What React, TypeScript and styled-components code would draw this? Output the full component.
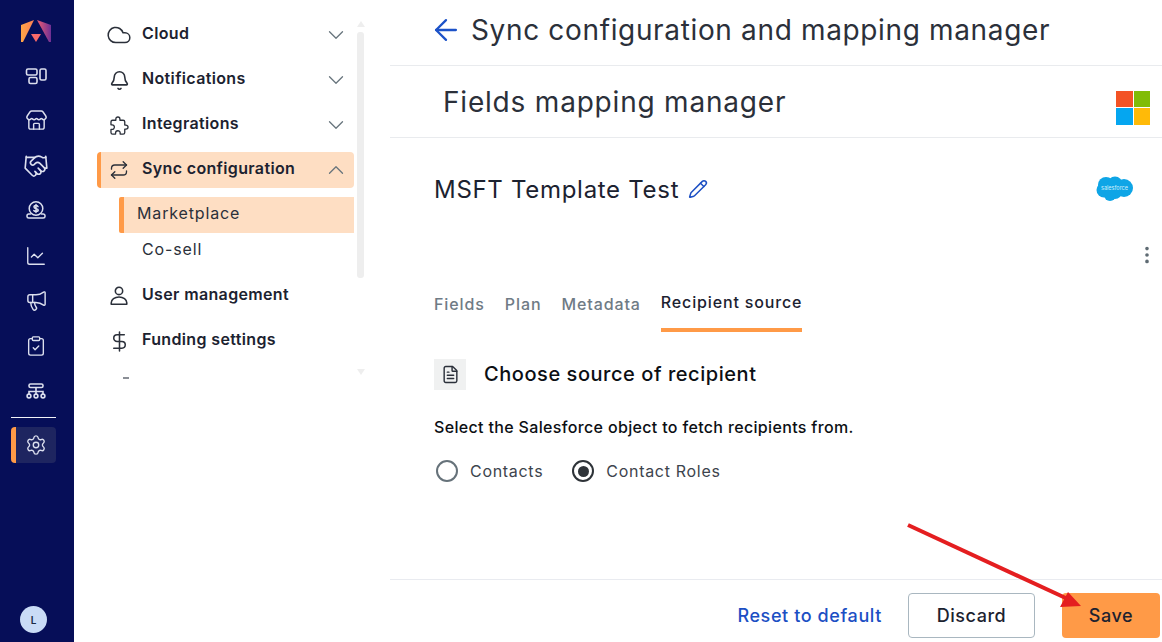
import React from "react";
import styled, { createGlobalStyle } from "styled-components";
import {
  ArrowLeft,
  Bell,
  ChartLine,
  ChevronDown,
  ChevronUp,
  ClipboardCheck,
  Cloud,
  DollarSign,
  EllipsisVertical,
  FileText,
  Handshake,
  Megaphone,
  Pencil,
  Repeat,
  Settings,
  Store,
} from "lucide-react";
import { IoExtensionPuzzleOutline } from "react-icons/io5";

const GlobalStyle = createGlobalStyle`
  html, body {
    margin: 0;
    padding: 0;
    background: #fff;
    font-family: "Inter", "Noto Sans", sans-serif;
  }
  * { box-sizing: border-box; }
`;

const Page = styled.div`
  position: relative;
  display: flex;
  width: 1162px;
  height: 642px;
  overflow: hidden;
  color: #1c2230;
`;

const Rail = styled.nav`
  display: flex;
  flex-direction: column;
  align-items: center;
  width: 74px;
  padding: 8px 18px 9px 11px;
  background: #060e58;
  flex-shrink: 0;
`;

const RailIcon = styled.div`
  display: flex;
  align-items: center;
  justify-content: center;
  width: 45px;
  height: 45px;
  padding-left: 5px;
  flex-shrink: 0;
  color: #dcdfee;
`;

const RailDivider = styled.div`
  width: 45px;
  height: 1px;
  margin: 4px 0 9px;
  background: #f1f2f8;
`;

const RailActive = styled.div`
  display: flex;
  align-items: center;
  justify-content: center;
  width: 45px;
  height: 36px;
  border-left: 5px solid #ff9a47;
  border-radius: 4px;
  background: #1e2560;
  color: #dcdfee;
`;

const Avatar = styled.div`
  display: flex;
  align-items: center;
  justify-content: center;
  width: 27px;
  height: 27px;
  margin-top: auto;
  border-radius: 50%;
  background: #c9dbf6;
  color: #1c2a44;
  font-size: 10px;
  font-weight: 600;
`;

const Sidebar = styled.aside`
  display: flex;
  width: 316px;
  height: 380px;
  padding-left: 23px;
  flex-shrink: 0;
  overflow: hidden;
`;

const Menu = styled.div`
  width: 257px;
  padding-top: 17px;
`;

const MenuItem = styled.div<{ $active?: boolean }>`
  display: flex;
  align-items: center;
  height: 36px;
  margin-bottom: 9px;
  padding-left: ${(p) => (p.$active ? "7px" : "11px")};
  padding-right: 5px;
  border-left: ${(p) => (p.$active ? "4px solid #ff9a47" : "none")};
  border-radius: 4px;
  background: ${(p) => (p.$active ? "#fedec3" : "transparent")};
  color: #2b303a;
`;

const NavIcon = styled.span`
  display: flex;
  align-items: center;
  justify-content: center;
  width: 22px;
  height: 26px;
  flex-shrink: 0;

  svg {
    flex-shrink: 0;
  }
`;

const MenuLabel = styled.span`
  flex: 1;
  margin-left: 12px;
  padding-bottom: 4px;
  color: #1c2230;
  font-size: 16px;
  font-weight: 600;
  letter-spacing: 0.35px;
`;

const Chevron = styled.span`
  display: flex;
  color: #68757d;
`;

const SubItem = styled.div<{ $active?: boolean }>`
  display: flex;
  align-items: center;
  height: ${(p) => (p.$active ? "36px" : "32px")};
  margin-left: 22px;
  margin-bottom: ${(p) => (p.$active ? "0" : "13px")};
  padding-left: ${(p) => (p.$active ? "13px" : "23px")};
  padding-bottom: ${(p) => (p.$active ? "4px" : "0")};
  border-left: ${(p) => (p.$active ? "5px solid #ff9a47" : "none")};
  border-radius: 2px 0 0 2px;
  background: ${(p) => (p.$active ? "#fedec3" : "transparent")};
  color: #2b303a;
  font-size: 16px;
  letter-spacing: 0.85px;
`;

const ClippedMark = styled.div`
  width: 6px;
  height: 2px;
  margin: 18px 0 0 26px;
  background: #8b8f96;
`;

const ScrollRail = styled.div`
  display: flex;
  flex-direction: column;
  align-items: center;
  width: 9px;
  margin-left: 2px;
  padding-top: 21px;
`;

const ScrollUp = styled.div`
  width: 0;
  height: 0;
  border-left: 4.5px solid transparent;
  border-right: 4.5px solid transparent;
  border-bottom: 6px solid #eeeeee;
`;

const ScrollDown = styled.div`
  width: 0;
  height: 0;
  margin-top: 91px;
  border-left: 4.5px solid transparent;
  border-right: 4.5px solid transparent;
  border-top: 6px solid #eeeeee;
`;

const ScrollThumb = styled.div`
  width: 7px;
  height: 246px;
  margin-top: 5px;
  border-radius: 3px;
  background: #eeeeee;
`;

const Main = styled.main`
  display: flex;
  flex-direction: column;
  flex: 1;
  min-width: 0;
`;

const Header = styled.header`
  display: flex;
  align-items: center;
  gap: 8px;
  height: 66px;
  padding: 0 0 6px 39px;
  border-bottom: 1px solid #e9ebee;
  color: #1c52c8;
`;

const HeaderTitle = styled.h1`
  margin: 0;
  color: #2b303a;
  font-size: 28px;
  font-weight: 400;
  letter-spacing: 0.65px;
`;

const SubHeader = styled.div`
  display: flex;
  align-items: center;
  justify-content: space-between;
  height: 72px;
  padding: 0 12px 0 53px;
  border-bottom: 1px solid #e9ebee;
`;

const SubTitle = styled.h2`
  margin: 0;
  color: #2b303a;
  font-size: 28px;
  font-weight: 400;
  letter-spacing: 0.8px;
`;

const MsLogo = styled.div`
  display: grid;
  grid-template-columns: 16.5px 16.5px;
  grid-auto-rows: 16.5px;
  gap: 1px;
  margin-top: 12px;
`;

const MsTile = styled.span<{ $color: string }>`
  background: ${(p) => p.$color};
`;

const Body = styled.section`
  flex: 1;
  padding: 32px 0 0 44px;
`;

const TitleRow = styled.div`
  display: flex;
  align-items: center;
  height: 38px;
  padding-right: 27px;
`;

const TemplateName = styled.div`
  color: #1c2230;
  font-size: 24px;
  letter-spacing: 0.7px;
`;

const EditIcon = styled.span`
  display: flex;
  margin: 0 auto 0 9px;
  color: #1c4fc4;
`;

const KebabRow = styled.div`
  display: flex;
  justify-content: flex-end;
  height: 22px;
  margin-top: 36px;
  padding-right: 4px;
  color: #5f6b73;
`;

const Tabs = styled.div`
  display: flex;
  gap: 20px;
  margin-top: 24px;
`;

const Tab = styled.div<{ $active?: boolean }>`
  height: 42px;
  padding-top: ${(p) => (p.$active ? "0" : "2px")};
  border-bottom: ${(p) => (p.$active ? "4px solid #ff9a47" : "none")};
  color: ${(p) => (p.$active ? "#1c2230" : "#6f7b85")};
  font-size: 16px;
  font-weight: 500;
  line-height: 24px;
  letter-spacing: ${(p) => (p.$active ? "0.85px" : "0.9px")};
`;

const SectionHead = styled.div`
  display: flex;
  align-items: center;
  gap: 18px;
  margin-top: 27px;
`;

const IconBox = styled.div`
  display: flex;
  align-items: center;
  justify-content: center;
  width: 32px;
  height: 31px;
  background: #f0f1f1;
  color: #2b303a;
`;

const SectionTitle = styled.div`
  padding-bottom: 2px;
  color: #0c0f14;
  font-size: 20px;
  font-weight: 500;
  letter-spacing: 0.55px;
`;

const Description = styled.div`
  margin-top: 26px;
  color: #0c0f14;
  font-size: 16px;
  font-weight: 500;
  line-height: 22px;
  letter-spacing: 0.34px;
`;

const RadioRow = styled.div`
  display: flex;
  gap: 29px;
  margin-top: 22px;
  padding-left: 2px;
`;

const RadioOption = styled.label`
  display: flex;
  align-items: center;
  gap: 12px;
  color: #3d444d;
  font-size: 16px;
  letter-spacing: 0.7px;
`;

const RadioCircle = styled.span<{ $checked?: boolean }>`
  display: flex;
  align-items: center;
  justify-content: center;
  width: 22px;
  height: 22px;
  border: 2.5px solid ${(p) => (p.$checked ? "#2e3338" : "#66727a")};
  border-radius: 50%;

  &::after {
    content: "";
    display: ${(p) => (p.$checked ? "block" : "none")};
    width: 11px;
    height: 11px;
    border-radius: 50%;
    background: #2e3338;
  }
`;

const Footer = styled.footer`
  display: flex;
  align-items: center;
  justify-content: flex-end;
  height: 63px;
  padding: 9px 2px 0 0;
  border-top: 1px solid #e9ebf0;
`;

const ResetLink = styled.a`
  margin-right: 26px;
  color: #1c4fc4;
  font-size: 18px;
  font-weight: 500;
  letter-spacing: 0.6px;
`;

const DiscardButton = styled.button`
  width: 127px;
  height: 45px;
  margin-right: 27px;
  border: 1px solid #a9b7c0;
  border-radius: 4px;
  background: #fff;
  color: #1c2230;
  font: 500 18px "Inter", sans-serif;
  letter-spacing: 0.55px;
`;

const SaveButton = styled.button`
  width: 98px;
  height: 45px;
  border: none;
  border-radius: 4px;
  background: #ff9a47;
  color: #1c2230;
  font: 500 18px "Inter", sans-serif;
  letter-spacing: 0.55px;
`;

const Annotation = styled.svg`
  position: absolute;
  left: 0;
  top: 0;
  pointer-events: none;
`;

function BrandLogo() {
  return (
    <svg width="32" height="24" viewBox="20 18 32 24">
      <defs>
        <linearGradient id="wingL" x1="0" y1="0" x2="1" y2="0">
          <stop offset="0" stopColor="#ffa646" />
          <stop offset="1" stopColor="#fb7f56" />
        </linearGradient>
        <linearGradient id="wingR" x1="0" y1="0" x2="1" y2="0">
          <stop offset="0" stopColor="#ee5d72" />
          <stop offset="1" stopColor="#6d2f95" />
        </linearGradient>
      </defs>
      <polygon points="21,24 34,19 23,41 21,41" fill="url(#wingL)" />
      <polygon points="37,19 51,24 51,41 49,41" fill="url(#wingR)" />
      <polygon points="31,33 41,33 36,41" fill="#fb6a6a" />
    </svg>
  );
}

function BoardsIcon() {
  return (
    <svg width="24" height="24" viewBox="0 0 24 24" fill="none" stroke="currentColor" strokeWidth="1.6">
      <rect x="2.500" y="5" width="10.500" height="6" rx="1.500" />
      <rect x="5" y="13.500" width="8" height="6" rx="1.500" />
      <rect x="16" y="5" width="6" height="11" rx="1.500" />
    </svg>
  );
}

function CoinIcon() {
  return (
    <svg width="24" height="24" viewBox="0 0 24 24" fill="none" stroke="currentColor" strokeWidth="1.5" strokeLinecap="round">
      <circle cx="12" cy="9.500" r="6.800" />
      <path d="M14 7.600c-.5-.7-1.200-1-2-1-1.200 0-2 .6-2 1.500 0 2.100 4.200 1 4.200 3 0 .9-.9 1.500-2.200 1.500-.9 0-1.700-.4-2.200-1.100M12 5.500v8" />
      <path d="M6.500 15H4.800C3.800 15 3 15.800 3 16.800v.7c0 1 .8 1.500 1.800 1.500h14.400c1 0 1.800-.5 1.800-1.500v-.7c0-1-.8-1.800-1.800-1.800h-1.700" />
    </svg>
  );
}

function OrgIcon() {
  return (
    <svg width="24" height="24" viewBox="0 0 24 24" fill="none" stroke="currentColor" strokeWidth="1.6">
      <rect x="5" y="5" width="14" height="3.500" rx="1.500" />
      <path d="M12 8.500V15M5 15v-2.500h14V15" />
      <circle cx="5" cy="17" r="1.900" />
      <circle cx="12" cy="17" r="1.900" />
      <circle cx="19" cy="17" r="1.900" />
    </svg>
  );
}

function UserIcon() {
  return (
    <svg width="22" height="22" viewBox="0 0 24 24" fill="none" stroke="currentColor" strokeWidth="1.700">
      <circle cx="12" cy="6.500" r="4" />
      <path d="M3.500 21v-1.500a8.500 6.500 0 0 1 17 0V21z" strokeLinejoin="round" />
    </svg>
  );
}

function SalesforceLogo() {
  return (
    <svg width="40" height="28" viewBox="0 0 40 28">
      <g fill="#0ea5e6">
        <circle cx="11" cy="10" r="8" />
        <circle cx="20" cy="9" r="7.500" />
        <circle cx="29" cy="13" r="9" />
        <circle cx="9" cy="15" r="7.500" />
        <circle cx="20" cy="17" r="7" />
        <circle cx="15" cy="20" r="6" />
      </g>
      <text x="19.500" y="15" textAnchor="middle" fontSize="5.500" fill="#cfeefb" fontFamily="Inter, sans-serif">
        salesforce
      </text>
    </svg>
  );
}

const NAV_TOP = [
  { label: "Cloud", icon: <Cloud size={26} strokeWidth={1.4} /> },
  { label: "Notifications", icon: <Bell size={21} strokeWidth={1.8} /> },
  { label: "Integrations", icon: <IoExtensionPuzzleOutline size={21} /> },
];

const NAV_BOTTOM = [
  { label: "User management", icon: <UserIcon /> },
  { label: "Funding settings", icon: <DollarSign size={23} strokeWidth={1.6} /> },
];

export default function App() {
  return (
    <Page>
      <GlobalStyle />
      <Rail>
        <RailIcon><BrandLogo /></RailIcon>
        <RailIcon><BoardsIcon /></RailIcon>
        <RailIcon><Store size={23} strokeWidth={1.5} /></RailIcon>
        <RailIcon><Handshake size={26} strokeWidth={1.5} /></RailIcon>
        <RailIcon><CoinIcon /></RailIcon>
        <RailIcon><ChartLine size={22} strokeWidth={1.5} /></RailIcon>
        <RailIcon><Megaphone size={23} strokeWidth={1.5} /></RailIcon>
        <RailIcon><ClipboardCheck size={22} strokeWidth={1.5} /></RailIcon>
        <RailIcon><OrgIcon /></RailIcon>
        <RailDivider />
        <RailActive><Settings size={22} strokeWidth={1.5} /></RailActive>
        <Avatar>L</Avatar>
      </Rail>

      <Sidebar>
        <Menu>
          {NAV_TOP.map(({ label, icon }) => (
            <MenuItem key={label}>
              <NavIcon>{icon}</NavIcon>
              <MenuLabel>{label}</MenuLabel>
              <Chevron><ChevronDown size={26} strokeWidth={1.2} /></Chevron>
            </MenuItem>
          ))}
          <MenuItem $active>
            <NavIcon><Repeat size={20} strokeWidth={1.6} /></NavIcon>
            <MenuLabel>Sync configuration</MenuLabel>
            <Chevron><ChevronUp size={26} strokeWidth={1.2} /></Chevron>
          </MenuItem>
          <SubItem $active>Marketplace</SubItem>
          <SubItem>Co-sell</SubItem>
          {NAV_BOTTOM.map(({ label, icon }) => (
            <MenuItem key={label}>
              <NavIcon>{icon}</NavIcon>
              <MenuLabel>{label}</MenuLabel>
            </MenuItem>
          ))}
          <ClippedMark />
        </Menu>
        <ScrollRail>
          <ScrollUp />
          <ScrollThumb />
          <ScrollDown />
        </ScrollRail>
      </Sidebar>

      <Main>
        <Header>
          <ArrowLeft size={34} strokeWidth={1.6} />
          <HeaderTitle>Sync configuration and mapping manager</HeaderTitle>
        </Header>
        <SubHeader>
          <SubTitle>Fields mapping manager</SubTitle>
          <MsLogo>
            <MsTile $color="#f35325" />
            <MsTile $color="#81bc06" />
            <MsTile $color="#05a6f0" />
            <MsTile $color="#ffba08" />
          </MsLogo>
        </SubHeader>
        <Body>
          <TitleRow>
            <TemplateName>MSFT Template Test</TemplateName>
            <EditIcon><Pencil size={20} strokeWidth={1.8} /></EditIcon>
            <SalesforceLogo />
          </TitleRow>
          <KebabRow><EllipsisVertical size={22} strokeWidth={2} /></KebabRow>
          <Tabs>
            <Tab>Fields</Tab>
            <Tab>Plan</Tab>
            <Tab>Metadata</Tab>
            <Tab $active>Recipient source</Tab>
          </Tabs>
          <SectionHead>
            <IconBox><FileText size={19} strokeWidth={1.8} /></IconBox>
            <SectionTitle>Choose source of recipient</SectionTitle>
          </SectionHead>
          <Description>Select the Salesforce object to fetch recipients from.</Description>
          <RadioRow>
            <RadioOption><RadioCircle />Contacts</RadioOption>
            <RadioOption><RadioCircle $checked />Contact Roles</RadioOption>
          </RadioRow>
        </Body>
        <Footer>
          <ResetLink>Reset to default</ResetLink>
          <DiscardButton>Discard</DiscardButton>
          <SaveButton>Save</SaveButton>
        </Footer>
      </Main>

      <Annotation width="1162" height="642">
        <line x1="908" y1="525" x2="1070" y2="600" stroke="#e41e20" strokeWidth="4" />
        <polygon points="1068,592 1060,607 1081,606" fill="#e41e20" />
      </Annotation>
    </Page>
  );
}
